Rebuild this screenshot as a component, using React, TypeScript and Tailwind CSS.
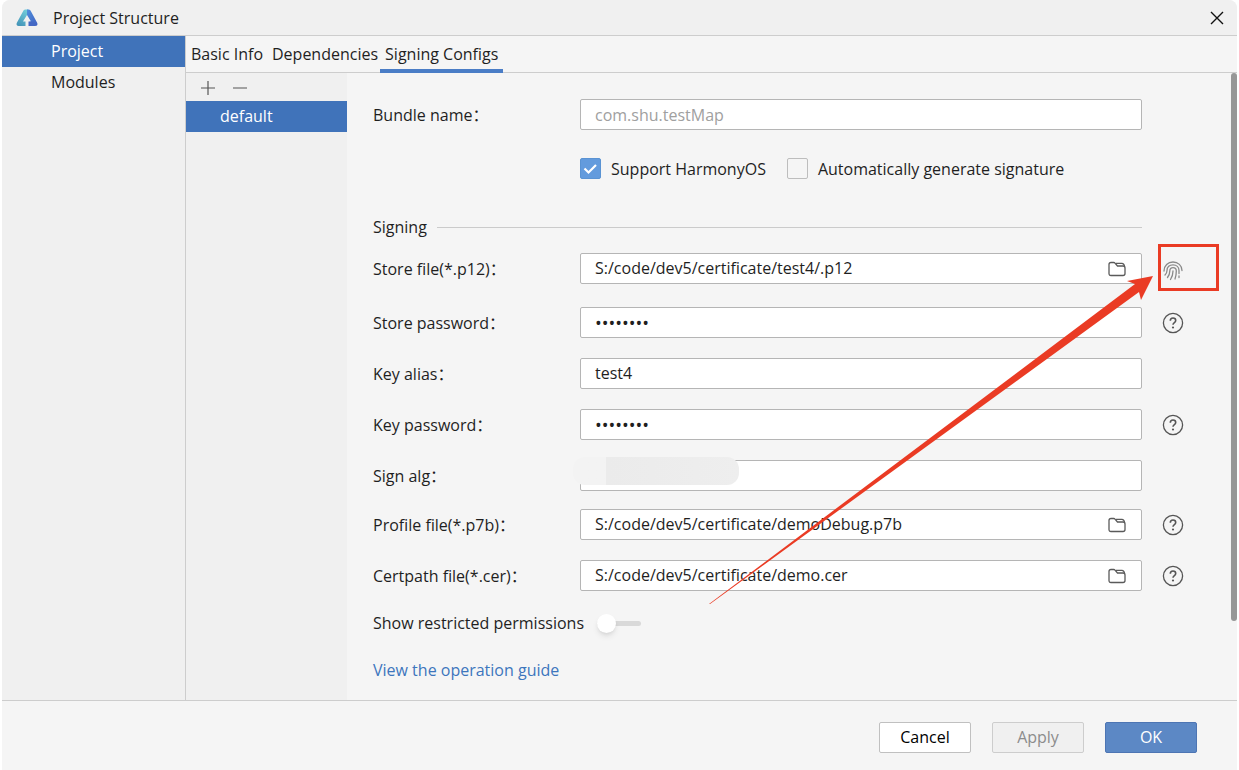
import React, { useState } from 'react';

type Field = {
  id: string;
  label: string;
  value: string;
  gap: string;
  type?: 'password' | 'text';
  browse?: boolean;
  action?: 'fingerprint' | 'help';
};

const fields: Field[] = [
  { id: 'store-file', label: 'Store file(*.p12)', value: 'S:/code/dev5/certificate/test4/.p12', gap: 'mt-4', browse: true, action: 'fingerprint' },
  { id: 'store-password', label: 'Store password', value: 'password', gap: 'mt-[23px]', type: 'password', action: 'help' },
  { id: 'key-alias', label: 'Key alias', value: 'test4', gap: 'mt-5' },
  { id: 'key-password', label: 'Key password', value: 'password', gap: 'mt-5', type: 'password', action: 'help' },
  { id: 'sign-alg', label: 'Sign alg', value: '', gap: 'mt-5' },
  { id: 'profile-file', label: 'Profile file(*.p7b)', value: 'S:/code/dev5/certificate/demoDebug.p7b', gap: 'mt-[18px]', browse: true, action: 'help' },
  { id: 'certpath-file', label: 'Certpath file(*.cer)', value: 'S:/code/dev5/certificate/demo.cer', gap: 'mt-5', browse: true, action: 'help' },
];

const Logo = () => (
  <svg className="w-[22px] h-[18px]" viewBox="0 0 22 18" aria-hidden="true">
    <defs>
      <linearGradient id="logo-left" x1="0" y1="1" x2="0.6" y2="0">
        <stop offset="0" stopColor="#3f8fb5" />
        <stop offset="1" stopColor="#6fcbd8" />
      </linearGradient>
      <linearGradient id="logo-right" x1="0" y1="0" x2="1" y2="1">
        <stop offset="0" stopColor="#4f8fdc" />
        <stop offset="1" stopColor="#3f5fc0" />
      </linearGradient>
    </defs>
    <path d="M7.500 1.500Q8.200.5 9.500.5H12L14 4l-3 2-4 6.500h2.500V17H2.500Q-.5 16.500 1 13.500Z" fill="url(#logo-left)" />
    <path d="M11 .5h1.500q1.200 0 2 1l6.500 12q1.500 3-1.500 3.500l-6-4.500H15L11 6Z" fill="url(#logo-right)" />
    <path d="M12.500 12.500h5L19.500 17h-7Z" fill="#4468c4" />
  </svg>
);

const FolderIcon = () => (
  <svg className="w-[18px] h-4" viewBox="0 0 18 16" fill="none" stroke="#5a5a5a" strokeWidth="1.300" aria-hidden="true">
    <path d="M1 3.500Q1 1.500 3 1.500h2.700q.8 0 1.300.6L9.500 5H15q2 0 2 2v5.500q0 2-2 2H3q-2 0-2-2Z" />
    <path d="M8 2.300h6q2 0 2.600 3.200" />
  </svg>
);

const HelpIcon = () => (
  <svg className="w-[22px] h-[22px]" viewBox="0 0 22 22" fill="none" stroke="#555" strokeWidth="1.300" aria-hidden="true">
    <circle cx="11" cy="11" r="9.600" />
    <path d="M8.300 8.800q0-2.800 2.700-2.800t2.700 2.500q0 1.300-1.300 2.200T11 12.800" strokeWidth="1.600" />
    <circle cx="11" cy="15.500" r="1.100" fill="#555" stroke="none" />
  </svg>
);

const FingerprintIcon = () => (
  <svg className="mt-1 w-[22px] h-[22px]" viewBox="0 0 22 22" fill="none" stroke="#8a8a8a" strokeWidth="1.300" strokeLinecap="round" aria-hidden="true">
    <path d="M2 11C2 5.500 6 2 11 2s9 3.500 9 8.500" />
    <path d="M3 15q2-2 2-4.500C5 7 7.500 4.800 11 4.800s6 2.300 6 5.700v3" />
    <path d="M5.500 17.500Q7.800 14.500 7.800 11c0-2 1.200-3.400 3.200-3.400s3.300 1.400 3.300 3.400c0 3.200-.3 5.200-1.300 8" />
    <path d="M8.500 19.500q2.500-4 2.500-8.500M17 16v1.500" />
  </svg>
);

const FieldRow = ({ field }: { field: Field }) => (
  <div className={`flex items-center h-[31px] ${field.gap}`}>
    <label htmlFor={field.id} className="w-[207px] shrink-0 whitespace-nowrap">
      {field.label}：
    </label>
    <div className="relative flex flex-1 h-full bg-white border border-[#b5b5b5] rounded-xs">
      <input
        id={field.id}
        type={field.type ?? 'text'}
        defaultValue={field.value}
        className={`flex-1 min-w-0 pl-3.5 bg-transparent outline-none ${field.type === 'password' ? 'text-lg' : 'pb-0.5'}`}
      />
      {field.browse && (
        <button type="button" aria-label={`Browse ${field.label}`} className="flex items-center px-[15px]">
          <FolderIcon />
        </button>
      )}
      {/* Blurred value */}
      {field.id === 'sign-alg' && (
        <div className="absolute -left-2 -top-1 w-[166px] h-7 rounded-xl bg-linear-to-r from-[#f3f3f3] from-20% via-[#ebebeb] via-20% to-[#eeeeee]"></div>
      )}
    </div>
    <div className="w-[89px] pl-5 shrink-0 flex items-center">
      {field.action && (
        <button type="button" aria-label={field.action}>
          {field.action === 'help' ? <HelpIcon /> : <FingerprintIcon />}
        </button>
      )}
    </div>
  </div>
);

const CheckOption = ({ label, initial }: { label: string; initial: boolean }) => {
  const [checked, setChecked] = useState(initial);

  return (
    <label className="flex items-center gap-2.5">
      <span className="relative flex">
        <input
          type="checkbox"
          checked={checked}
          onChange={(e) => setChecked(e.target.checked)}
          className="appearance-none w-[21px] h-[21px] rounded-xs border border-[#bdbdbd] checked:border-[#5a93d3] checked:bg-[#639bdd]"
        />
        {checked && (
          <svg className="absolute inset-0 pointer-events-none" viewBox="0 0 21 21" fill="none" stroke="white" strokeWidth="2.200" aria-hidden="true">
            <path d="m4.500 10.500 4 4 7.500-7.500" />
          </svg>
        )}
      </span>
      {label}
    </label>
  );
};

const App = () => {
  return (
    <div className="min-h-screen flex flex-col px-0.5 bg-white font-['Open_Sans','Noto_Sans_CJK_SC',sans-serif] text-base leading-5 text-[#1f1f1f]">
      <div className="flex-1 flex flex-col rounded-t-lg bg-[#f5f5f5] overflow-hidden">
        {/* Title bar */}
        <header className="h-9 flex items-center justify-between pl-3.5 pr-3 bg-[#f0f0f0] border-b border-[#cdcdcd]">
          <div className="flex items-center gap-[15px]">
            <Logo />
            <h1>Project Structure</h1>
          </div>
          <button type="button" aria-label="Close">
            <svg className="w-4 h-4" viewBox="0 0 16 16" stroke="#111" strokeWidth="1.400" aria-hidden="true">
              <path d="m2 2 12 12M14 2 2 14" />
            </svg>
          </button>
        </header>

        <div className="flex-1 flex">
          {/* Sections */}
          <nav className="w-[184px] shrink-0 flex flex-col bg-[#f0f0f0] border-r border-[#cdcdcd]">
            <button type="button" className="h-[31px] pl-[49px] pb-0.5 text-left bg-[#4073ba] text-white">Project</button>
            <button type="button" className="h-[31px] pl-[49px] pb-0.5 text-left">Modules</button>
          </nav>

          <div className="flex-1 min-w-0 flex flex-col">
            {/* Tabs */}
            <div role="tablist" className="h-[37px] flex border-b border-[#cdcdcd]">
              <button type="button" role="tab" className="pl-[5px] pr-1">Basic Info</button>
              <button type="button" role="tab" className="pl-[5px] pr-0.5">Dependencies</button>
              <button type="button" role="tab" aria-selected="true" className="px-[5px] -mb-px pt-[3px] border-b-4 border-[#4a7dc6]">Signing Configs</button>
            </div>

            <div className="flex-1 flex">
              {/* Config list */}
              <aside className="w-[161px] shrink-0 bg-[#f0f0f0]">
                <div className="h-7 flex items-center gap-4 pl-3.5 pt-0.5">
                  <button type="button" aria-label="Add">
                    <svg className="w-4 h-4" viewBox="0 0 16 16" stroke="#555" strokeWidth="1.200" aria-hidden="true">
                      <path d="M8 1v14M1 8h14" />
                    </svg>
                  </button>
                  <button type="button" aria-label="Remove">
                    <svg className="w-4 h-4" viewBox="0 0 16 16" stroke="#555" strokeWidth="1.200" aria-hidden="true">
                      <path d="M1 8h14" />
                    </svg>
                  </button>
                </div>
                <button type="button" className="w-full h-[31px] pl-[34px] pb-0.5 text-left bg-[#4073ba] text-white">default</button>
              </aside>

              {/* Signing form */}
              <form className="relative flex-1 min-w-0 pl-[26px] pt-[26px]">
                <div className="flex items-center h-[31px]">
                  <label htmlFor="bundle-name" className="w-[207px] shrink-0">Bundle name：</label>
                  <input
                    id="bundle-name"
                    type="text"
                    placeholder="com.shu.testMap"
                    className="flex-1 min-w-0 h-full px-3.5 bg-white border border-[#b5b5b5] rounded-xs outline-none placeholder:text-[#a0a0a0]"
                  />
                  <div className="w-[89px] shrink-0"></div>
                </div>

                <div className="mt-7 pl-[207px] flex gap-[21px]">
                  <CheckOption label="Support HarmonyOS" initial={true} />
                  <CheckOption label="Automatically generate signature" initial={false} />
                </div>

                <div className="mt-[38px] mr-[89px] flex items-center gap-2.5">
                  <h2>Signing</h2>
                  <div className="flex-1 h-px bg-[#cbcbcb]"></div>
                </div>

                {fields.map((field) => (
                  <FieldRow key={field.id} field={field} />
                ))}

                <label className="mt-[22px] flex items-center gap-[13px]">
                  Show restricted permissions
                  <span className="relative flex items-center w-11 h-5">
                    <input type="checkbox" role="switch" className="peer appearance-none w-11 h-[5px] rounded-full bg-[#d9d9d9]" />
                    <span className="absolute left-0 w-[19px] h-[19px] rounded-full bg-white shadow-md peer-checked:left-6"></span>
                  </span>
                </label>

                <a href="#guide" className="mt-[27px] inline-block text-[#3d76bd]">View the operation guide</a>

                {/* Callout */}
                <svg className="absolute top-[168px] right-3 w-[510px] h-[364px] pointer-events-none" viewBox="0 0 510 364" fill="#ea3b24" aria-hidden="true">
                  <path d="M0 363 426 43l-8-3 26-5-12 24-2-8L1 363Z" />
                  <rect x="450.500" y="4.500" width="58" height="44" fill="none" stroke="#ea3b24" strokeWidth="3" />
                </svg>
              </form>

              {/* Scrollbar */}
              <div className="w-1.5 h-[548px] rounded-sm bg-[#979797]"></div>
            </div>
          </div>
        </div>

        {/* Actions */}
        <footer className="h-[70px] flex items-start justify-end gap-[21px] pt-[21px] pr-10 border-t border-[#cdcdcd]">
          <button type="button" className="w-[92px] h-[31px] pb-0.5 bg-white border border-[#c0c0c0] rounded-xs text-black">Cancel</button>
          <button type="button" disabled className="w-[92px] h-[31px] pb-0.5 bg-[#f0f0f0] border border-[#cdcdcd] rounded-xs text-[#8c8c8c]">Apply</button>
          <button type="button" className="w-[92px] h-[31px] pb-0.5 bg-[#5c88c5] border border-[#4d75b3] rounded-xs text-white">OK</button>
        </footer>
      </div>
    </div>
  );
};

export default App;
